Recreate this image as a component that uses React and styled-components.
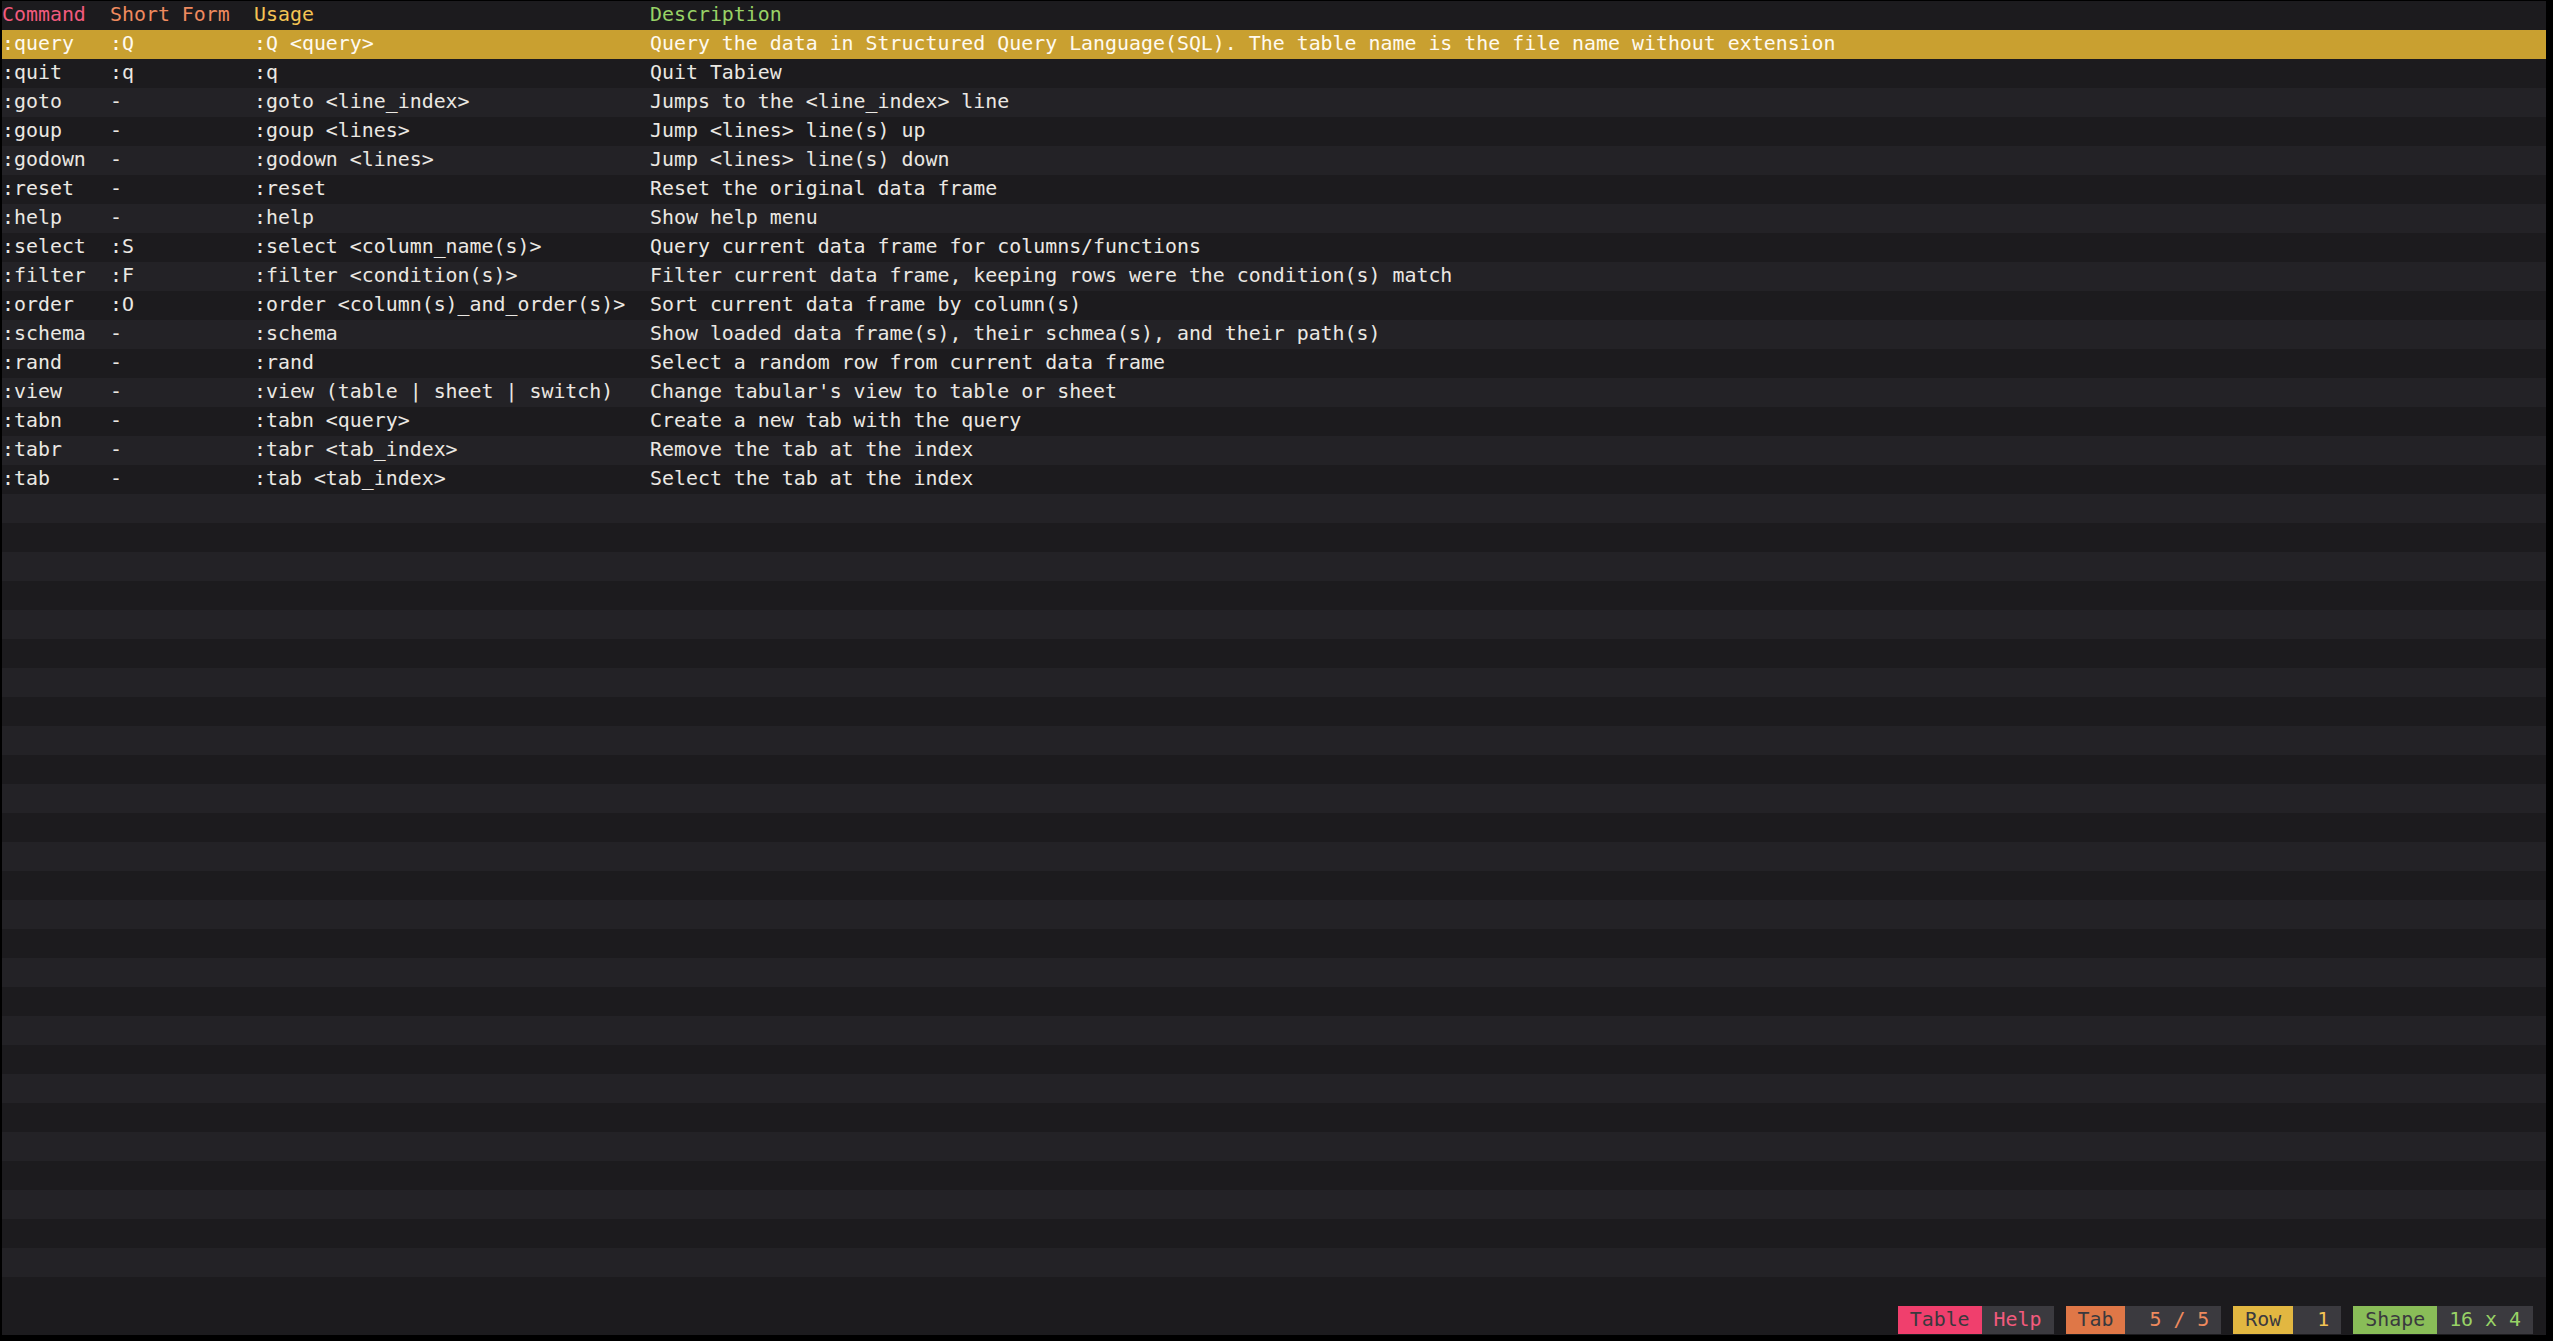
import React from "react";
import styled, { createGlobalStyle } from "styled-components";

const GlobalStyle = createGlobalStyle`
  html, body { margin: 0; padding: 0; background: #000; }
  #root { height: 100vh; }
`;

const COMMANDS = [
  [":query", ":Q", ":Q <query>", "Query the data in Structured Query Language(SQL). The table name is the file name without extension"],
  [":quit", ":q", ":q", "Quit Tabiew"],
  [":goto", "-", ":goto <line_index>", "Jumps to the <line_index> line"],
  [":goup", "-", ":goup <lines>", "Jump <lines> line(s) up"],
  [":godown", "-", ":godown <lines>", "Jump <lines> line(s) down"],
  [":reset", "-", ":reset", "Reset the original data frame"],
  [":help", "-", ":help", "Show help menu"],
  [":select", ":S", ":select <column_name(s)>", "Query current data frame for columns/functions"],
  [":filter", ":F", ":filter <condition(s)>", "Filter current data frame, keeping rows were the condition(s) match"],
  [":order", ":O", ":order <column(s)_and_order(s)>", "Sort current data frame by column(s)"],
  [":schema", "-", ":schema", "Show loaded data frame(s), their schmea(s), and their path(s)"],
  [":rand", "-", ":rand", "Select a random row from current data frame"],
  [":view", "-", ":view (table | sheet | switch)", "Change tabular's view to table or sheet"],
  [":tabn", "-", ":tabn <query>", "Create a new tab with the query"],
  [":tabr", "-", ":tabr <tab_index>", "Remove the tab at the index"],
  [":tab", "-", ":tab <tab_index>", "Select the tab at the index"],
];

const BODY_ROWS = 44;

const Frame = styled.div`
  height: 100vh;
  box-sizing: border-box;
  padding: 1px 7px 6px 2px;
  background: #000;
  display: flex;
`;

const Screen = styled.div`
  flex: 1;
  display: flex;
  flex-direction: column;
  background: #1c1b1e;
  overflow: hidden;
  font-family: "DejaVu Sans Mono", "Liberation Mono", monospace;
  font-size: 19.9px;
  line-height: 27px;
  color: #ebe8e3;
`;

const Row = styled.div`
  display: grid;
  grid-template-columns: 108px 144px 396px 1fr;
  height: 29px;
  flex: none;
  white-space: pre;
  overflow: hidden;
  background: ${(p) => (p.$selected ? "#c9a030" : "transparent")};
  color: ${(p) => (p.$selected ? "#fffaf0" : "inherit")};
`;

const Body = styled.div`
  flex: 1;
  display: flex;
  flex-direction: column;
  overflow: hidden;
  & > ${Row}:nth-child(odd) {
    background: #232226;
  }
  & > ${Row}:first-child {
    background: ${(p) => (p.$firstSelected ? "#c9a030" : "#232226")};
  }
`;

const HeadCell = styled.span`
  color: ${(p) => p.$color};
`;

const Cell = styled.span``;

const StatusBar = styled.div`
  height: 29px;
  flex: none;
  display: flex;
  justify-content: flex-end;
  align-items: flex-start;
  gap: 12px;
  padding-right: 13px;
`;

const Group = styled.div`
  display: flex;
  height: 28px;
  line-height: 27px;
`;

const Label = styled.span`
  background: ${(p) => p.$color};
  color: #3a393e;
  padding: 0 12px;
`;

const Value = styled.span`
  background: #3b3a3f;
  color: ${(p) => p.$color};
  padding: 0 12px 0 ${(p) => p.$pl || 12}px;
  white-space: pre;
`;

const HEADERS = [
  ["Command", "#f25a7d"],
  ["Short Form", "#ef8a5e"],
  ["Usage", "#f3c454"],
  ["Description", "#98d266"],
];

export default function App() {
  const empties = Array.from({ length: BODY_ROWS - COMMANDS.length });
  return (
    <>
      <GlobalStyle />
      <Frame>
        <Screen>
          <Row>
            {HEADERS.map(([t, c]) => (
              <HeadCell key={t} $color={c}>
                {t}
              </HeadCell>
            ))}
          </Row>
          <Body $firstSelected>
            {COMMANDS.map((r, i) => (
              <Row key={r[0]} $selected={i === 0}>
                {r.map((c, j) => (
                  <Cell key={j}>{c}</Cell>
                ))}
              </Row>
            ))}
            {empties.map((_, i) => (
              <Row key={"e" + i} />
            ))}
          </Body>
          <StatusBar>
            <Group>
              <Label $color="#f03f6d">Table</Label>
              <Value $color="#f25a7d">Help</Value>
            </Group>
            <Group>
              <Label $color="#df7747">Tab</Label>
              <Value $color="#ef8a5e" $pl={24}>5 / 5</Value>
            </Group>
            <Group>
              <Label $color="#e2b741">Row</Label>
              <Value $color="#f3c454" $pl={24}>1</Value>
            </Group>
            <Group>
              <Label $color="#89bd58">Shape</Label>
              <Value $color="#98d266">16 x 4</Value>
            </Group>
          </StatusBar>
        </Screen>
      </Frame>
    </>
  );
}
